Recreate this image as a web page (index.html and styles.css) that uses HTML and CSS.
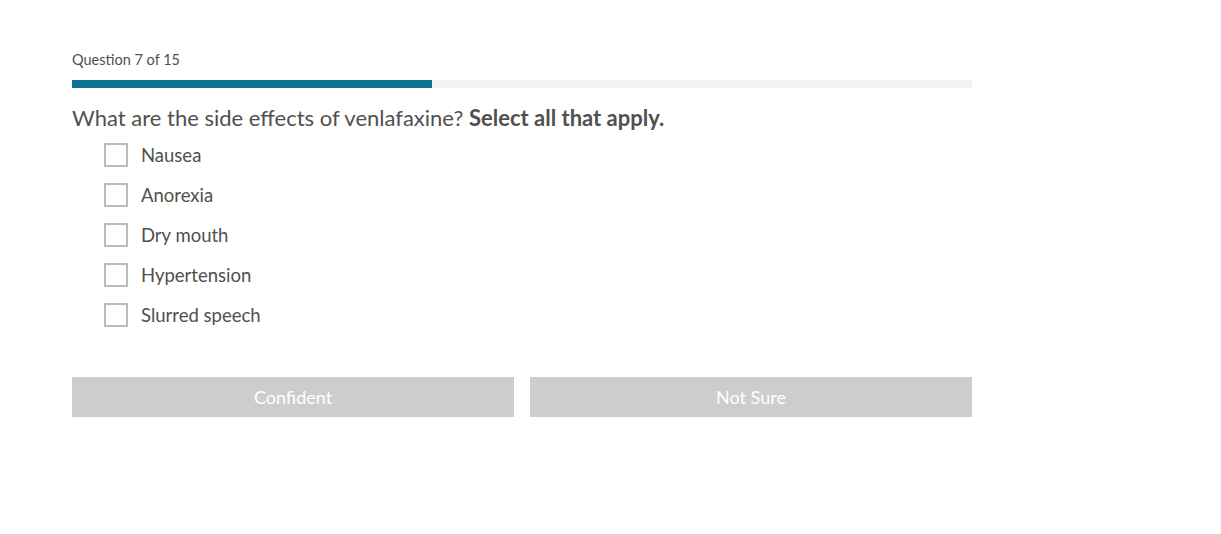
FILE: index.html
```html
<!DOCTYPE html>
<html lang="en">
<head>
  <meta charset="UTF-8">
  <title>Quiz</title>
  <link rel="stylesheet" href="styles.css">
</head>
<body>
  <div class="quiz">
    <div class="counter">Question 7 of 15</div>
    <div class="progress"><div class="progress-fill" style="width: 40%;"></div></div>

    <h2 class="question">What are the side effects of venlafaxine? <strong>Select all that apply.</strong></h2>

    <div class="options">
      <label class="option"><input type="checkbox"><span class="box"></span>Nausea</label>
      <label class="option"><input type="checkbox"><span class="box"></span>Anorexia</label>
      <label class="option"><input type="checkbox"><span class="box"></span>Dry mouth</label>
      <label class="option"><input type="checkbox"><span class="box"></span>Hypertension</label>
      <label class="option"><input type="checkbox"><span class="box"></span>Slurred speech</label>
    </div>

    <div class="actions">
      <button disabled>Confident</button>
      <button disabled>Not Sure</button>
    </div>
  </div>
</body>
</html>
```

FILE: styles.css
```css
body {
  background: #fff;
  font-family: Lato, 'Open Sans', sans-serif;
  color: #505050;
  margin: 0;
  padding: 0;
}

.quiz {
  width: 900px;
  margin-left: 72px;
  padding-top: 50px;
}

.counter {
  font-size: 14.5px;
  line-height: 20px;
  color: #505050;
}

.progress {
  height: 8px;
  background: #f2f2f2;
  margin-top: 10px;
}

.progress-fill {
  height: 100%;
  background: #0c7394;
}

.question {
  font-size: 22px;
  font-weight: normal;
  line-height: 30px;
  margin: 15px 0 0;
  color: #505050;
}

.question strong {
  font-weight: bold;
}

.options {
  padding-left: 32px;
  margin-top: 2px;
}

.option {
  display: flex;
  align-items: center;
  height: 40px;
  font-size: 18.5px;
  cursor: pointer;
}

.option input {
  display: none;
}

.box {
  width: 20px;
  height: 20px;
  border: 2px solid #bbb;
  margin-right: 13px;
  background: #fff;
}

.actions {
  display: flex;
  gap: 16px;
  margin-top: 42px;
}

.actions button {
  flex: 1;
  height: 40px;
  background: #cdcdcd;
  color: #fff;
  border: none;
  font-family: inherit;
  font-size: 18px;
}
```
